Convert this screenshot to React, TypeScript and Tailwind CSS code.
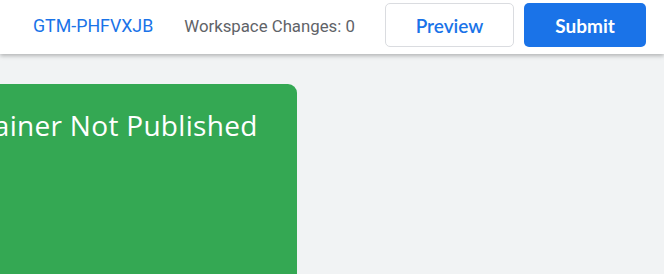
export default function App() {
  return (
    <div className="relative h-[274px] w-[664px] overflow-hidden bg-[#f1f3f4] font-['Roboto',sans-serif]">
      {/* top bar */}
      <div className="relative z-10 flex h-[54px] items-start bg-white pl-[33px] pr-[18px] pt-[3px] shadow-[0_2px_4px_rgba(0,0,0,0.25)]">
        <div className="flex h-[44px] items-center pt-[3px] text-[17.8px] text-[#1a73e8]">GTM-PHFVXJB</div>
        <div className="ml-[31px] flex h-[44px] items-center pt-[3px] text-[16.8px] text-[#5f6368]">
          Workspace Changes: 0
        </div>
        <div className="ml-auto flex gap-[10px]">
          <button className="h-[44px] w-[129px] rounded-[5px] border border-[#dadce0] bg-white pt-[3px] font-['Lato',sans-serif] text-[19px] font-semibold text-[#1a73e8]">
            Preview
          </button>
          <button className="h-[44px] w-[122px] rounded-[5px] bg-[#1a73e8] pt-[3px] font-['Lato',sans-serif] text-[19px] font-bold text-white">
            Submit
          </button>
        </div>
      </div>

      {/* publish card */}
      <div className="ml-[-100px] mt-[30px] h-[220px] w-[397px] rounded-tr-[9px] bg-[#34a853] pl-[31px] pt-[20px]">
        <h2 className="whitespace-nowrap font-['Open_Sans',sans-serif] text-[28px] font-normal tracking-[0.3px] text-white">
          Container Not Published
        </h2>
      </div>
    </div>
  );
}
